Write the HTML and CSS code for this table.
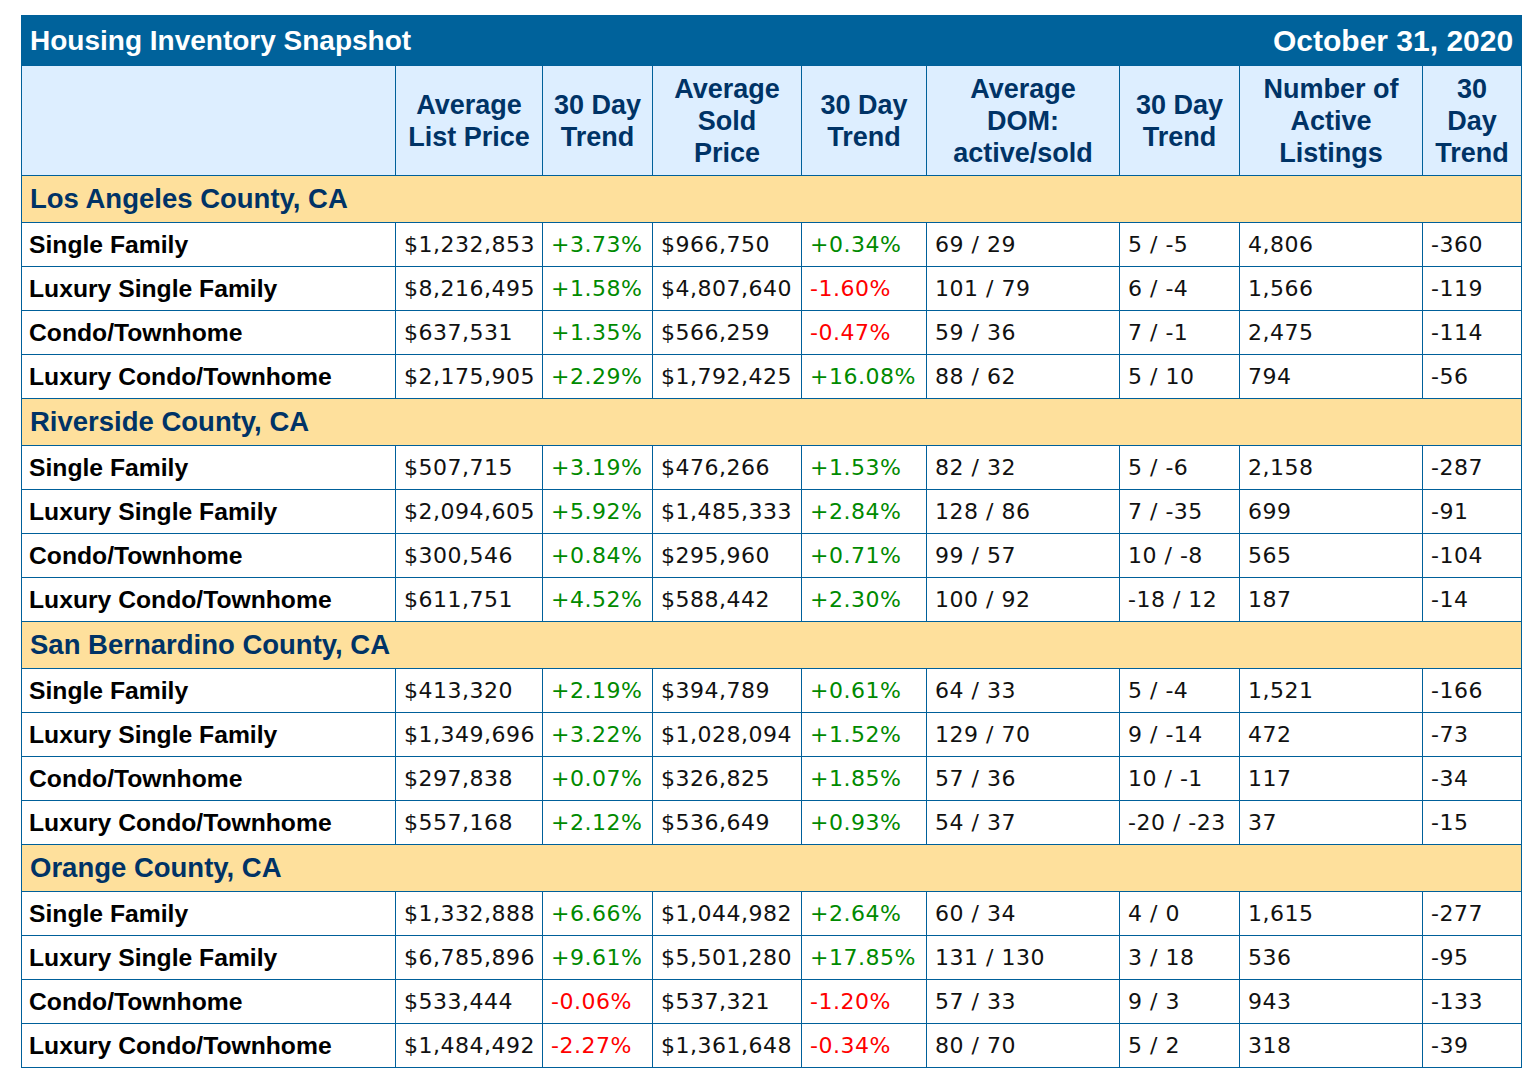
FILE: index.html
```html
<!DOCTYPE html>
<html lang="en">
<head>
<meta charset="utf-8">
<title>Housing Inventory Snapshot</title>
<link rel="stylesheet" href="styles.css">
</head>
<body>
<div class="wrap">
<table class="snap">
<colgroup>
<col class="c1"><col class="c2"><col class="c3"><col class="c4"><col class="c5"><col class="c6"><col class="c7"><col class="c8"><col class="c9">
</colgroup>
<thead>
<tr class="title-row"><th colspan="9"><div class="title-inner"><span class="title-name">Housing Inventory Snapshot</span><span class="title-date">October 31, 2020</span></div></th></tr>
<tr class="head-row">
<th class="lab"></th>
<th class="k">Average<br>List Price</th>
<th>30 Day<br>Trend</th>
<th class="k">Average<br>Sold<br>Price</th>
<th>30 Day<br>Trend</th>
<th class="k">Average<br>DOM:<br>active/sold</th>
<th>30 Day<br>Trend</th>
<th class="k">Number of<br>Active<br>Listings</th>
<th>30<br>Day<br>Trend</th>
</tr>
</thead>
<tbody>
<tr class="grp"><td colspan="9">Los Angeles County, CA</td></tr>
<tr><td class="lab">Single Family</td><td class="k">$1,232,853</td><td class="up">+3.73%</td><td class="k">$966,750</td><td class="up">+0.34%</td><td class="k">69 / 29</td><td>5 / -5</td><td class="k">4,806</td><td>-360</td></tr>
<tr><td class="lab">Luxury Single Family</td><td class="k">$8,216,495</td><td class="up">+1.58%</td><td class="k">$4,807,640</td><td class="dn">-1.60%</td><td class="k">101 / 79</td><td>6 / -4</td><td class="k">1,566</td><td>-119</td></tr>
<tr><td class="lab">Condo/Townhome</td><td class="k">$637,531</td><td class="up">+1.35%</td><td class="k">$566,259</td><td class="dn">-0.47%</td><td class="k">59 / 36</td><td>7 / -1</td><td class="k">2,475</td><td>-114</td></tr>
<tr><td class="lab">Luxury Condo/Townhome</td><td class="k">$2,175,905</td><td class="up">+2.29%</td><td class="k">$1,792,425</td><td class="up">+16.08%</td><td class="k">88 / 62</td><td>5 / 10</td><td class="k">794</td><td>-56</td></tr>
<tr class="grp"><td colspan="9">Riverside County, CA</td></tr>
<tr><td class="lab">Single Family</td><td class="k">$507,715</td><td class="up">+3.19%</td><td class="k">$476,266</td><td class="up">+1.53%</td><td class="k">82 / 32</td><td>5 / -6</td><td class="k">2,158</td><td>-287</td></tr>
<tr><td class="lab">Luxury Single Family</td><td class="k">$2,094,605</td><td class="up">+5.92%</td><td class="k">$1,485,333</td><td class="up">+2.84%</td><td class="k">128 / 86</td><td>7 / -35</td><td class="k">699</td><td>-91</td></tr>
<tr><td class="lab">Condo/Townhome</td><td class="k">$300,546</td><td class="up">+0.84%</td><td class="k">$295,960</td><td class="up">+0.71%</td><td class="k">99 / 57</td><td>10 / -8</td><td class="k">565</td><td>-104</td></tr>
<tr><td class="lab">Luxury Condo/Townhome</td><td class="k">$611,751</td><td class="up">+4.52%</td><td class="k">$588,442</td><td class="up">+2.30%</td><td class="k">100 / 92</td><td>-18 / 12</td><td class="k">187</td><td>-14</td></tr>
<tr class="grp"><td colspan="9">San Bernardino County, CA</td></tr>
<tr><td class="lab">Single Family</td><td class="k">$413,320</td><td class="up">+2.19%</td><td class="k">$394,789</td><td class="up">+0.61%</td><td class="k">64 / 33</td><td>5 / -4</td><td class="k">1,521</td><td>-166</td></tr>
<tr><td class="lab">Luxury Single Family</td><td class="k">$1,349,696</td><td class="up">+3.22%</td><td class="k">$1,028,094</td><td class="up">+1.52%</td><td class="k">129 / 70</td><td>9 / -14</td><td class="k">472</td><td>-73</td></tr>
<tr><td class="lab">Condo/Townhome</td><td class="k">$297,838</td><td class="up">+0.07%</td><td class="k">$326,825</td><td class="up">+1.85%</td><td class="k">57 / 36</td><td>10 / -1</td><td class="k">117</td><td>-34</td></tr>
<tr><td class="lab">Luxury Condo/Townhome</td><td class="k">$557,168</td><td class="up">+2.12%</td><td class="k">$536,649</td><td class="up">+0.93%</td><td class="k">54 / 37</td><td>-20 / -23</td><td class="k">37</td><td>-15</td></tr>
<tr class="grp"><td colspan="9">Orange County, CA</td></tr>
<tr><td class="lab">Single Family</td><td class="k">$1,332,888</td><td class="up">+6.66%</td><td class="k">$1,044,982</td><td class="up">+2.64%</td><td class="k">60 / 34</td><td>4 / 0</td><td class="k">1,615</td><td>-277</td></tr>
<tr><td class="lab">Luxury Single Family</td><td class="k">$6,785,896</td><td class="up">+9.61%</td><td class="k">$5,501,280</td><td class="up">+17.85%</td><td class="k">131 / 130</td><td>3 / 18</td><td class="k">536</td><td>-95</td></tr>
<tr><td class="lab">Condo/Townhome</td><td class="k">$533,444</td><td class="dn">-0.06%</td><td class="k">$537,321</td><td class="dn">-1.20%</td><td class="k">57 / 33</td><td>9 / 3</td><td class="k">943</td><td>-133</td></tr>
<tr><td class="lab">Luxury Condo/Townhome</td><td class="k">$1,484,492</td><td class="dn">-2.27%</td><td class="k">$1,361,648</td><td class="dn">-0.34%</td><td class="k">80 / 70</td><td>5 / 2</td><td class="k">318</td><td>-39</td></tr>
</tbody>
</table>
</div>
</body>
</html>
```
FILE: styles.css
```css
html, body {
  margin: 0;
  padding: 0;
  background: #ffffff;
}

.wrap {
  padding: 15px 0 0 21px;
}

.snap {
  border-collapse: collapse;
  table-layout: fixed;
  width: 1500px;
  font-family: "DejaVu Sans", Verdana, sans-serif;
  font-size: 22px;
  letter-spacing: 0.5px;
  color: #111111;
}

.c1 { width: 374px; }
.c2 { width: 147px; }
.c3 { width: 110px; }
.c4 { width: 149px; }
.c5 { width: 125px; }
.c6 { width: 193px; }
.c7 { width: 120px; }
.c8 { width: 183px; }
.c9 { width: 99px; }

.snap th,
.snap td {
  border: 1px solid #00609a;
  padding: 0 8px;
  white-space: nowrap;
}

.title-row th {
  background: #00629b;
  height: 49px;
  padding: 0 8px 0 8px;
  color: #ffffff;
  font-family: "Liberation Sans", Arial, sans-serif;
  font-weight: bold;
  letter-spacing: 0;
  text-align: left;
}

.title-inner {
  display: flex;
  justify-content: space-between;
  align-items: center;
  line-height: 34px;
}

.title-name {
  font-size: 28px;
}

.title-date {
  font-size: 30px;
}

.head-row th {
  background: #ddeeff;
  height: 109px;
  padding: 0 2px;
  color: #003366;
  font-family: "Liberation Sans", Arial, sans-serif;
  font-weight: bold;
  font-size: 27px;
  letter-spacing: 0;
  line-height: 32px;
  text-align: center;
  vertical-align: middle;
}

.snap .k {
  border-left-color: #000000;
}

.grp td {
  background: #fee09c;
  height: 46px;
  padding: 0 8px;
  color: #003366;
  font-family: "Liberation Sans", Arial, sans-serif;
  font-weight: bold;
  font-size: 27.5px;
  letter-spacing: 0;
}

.snap tbody tr:not(.grp) td {
  height: 43px;
  vertical-align: middle;
}

.snap td.lab {
  padding-left: 7px;
  font-family: "Liberation Sans", Arial, sans-serif;
  font-weight: bold;
  font-size: 24.7px;
  letter-spacing: 0;
  color: #000000;
}

.up { color: #008a00; }
.dn { color: #ff0000; }
```
